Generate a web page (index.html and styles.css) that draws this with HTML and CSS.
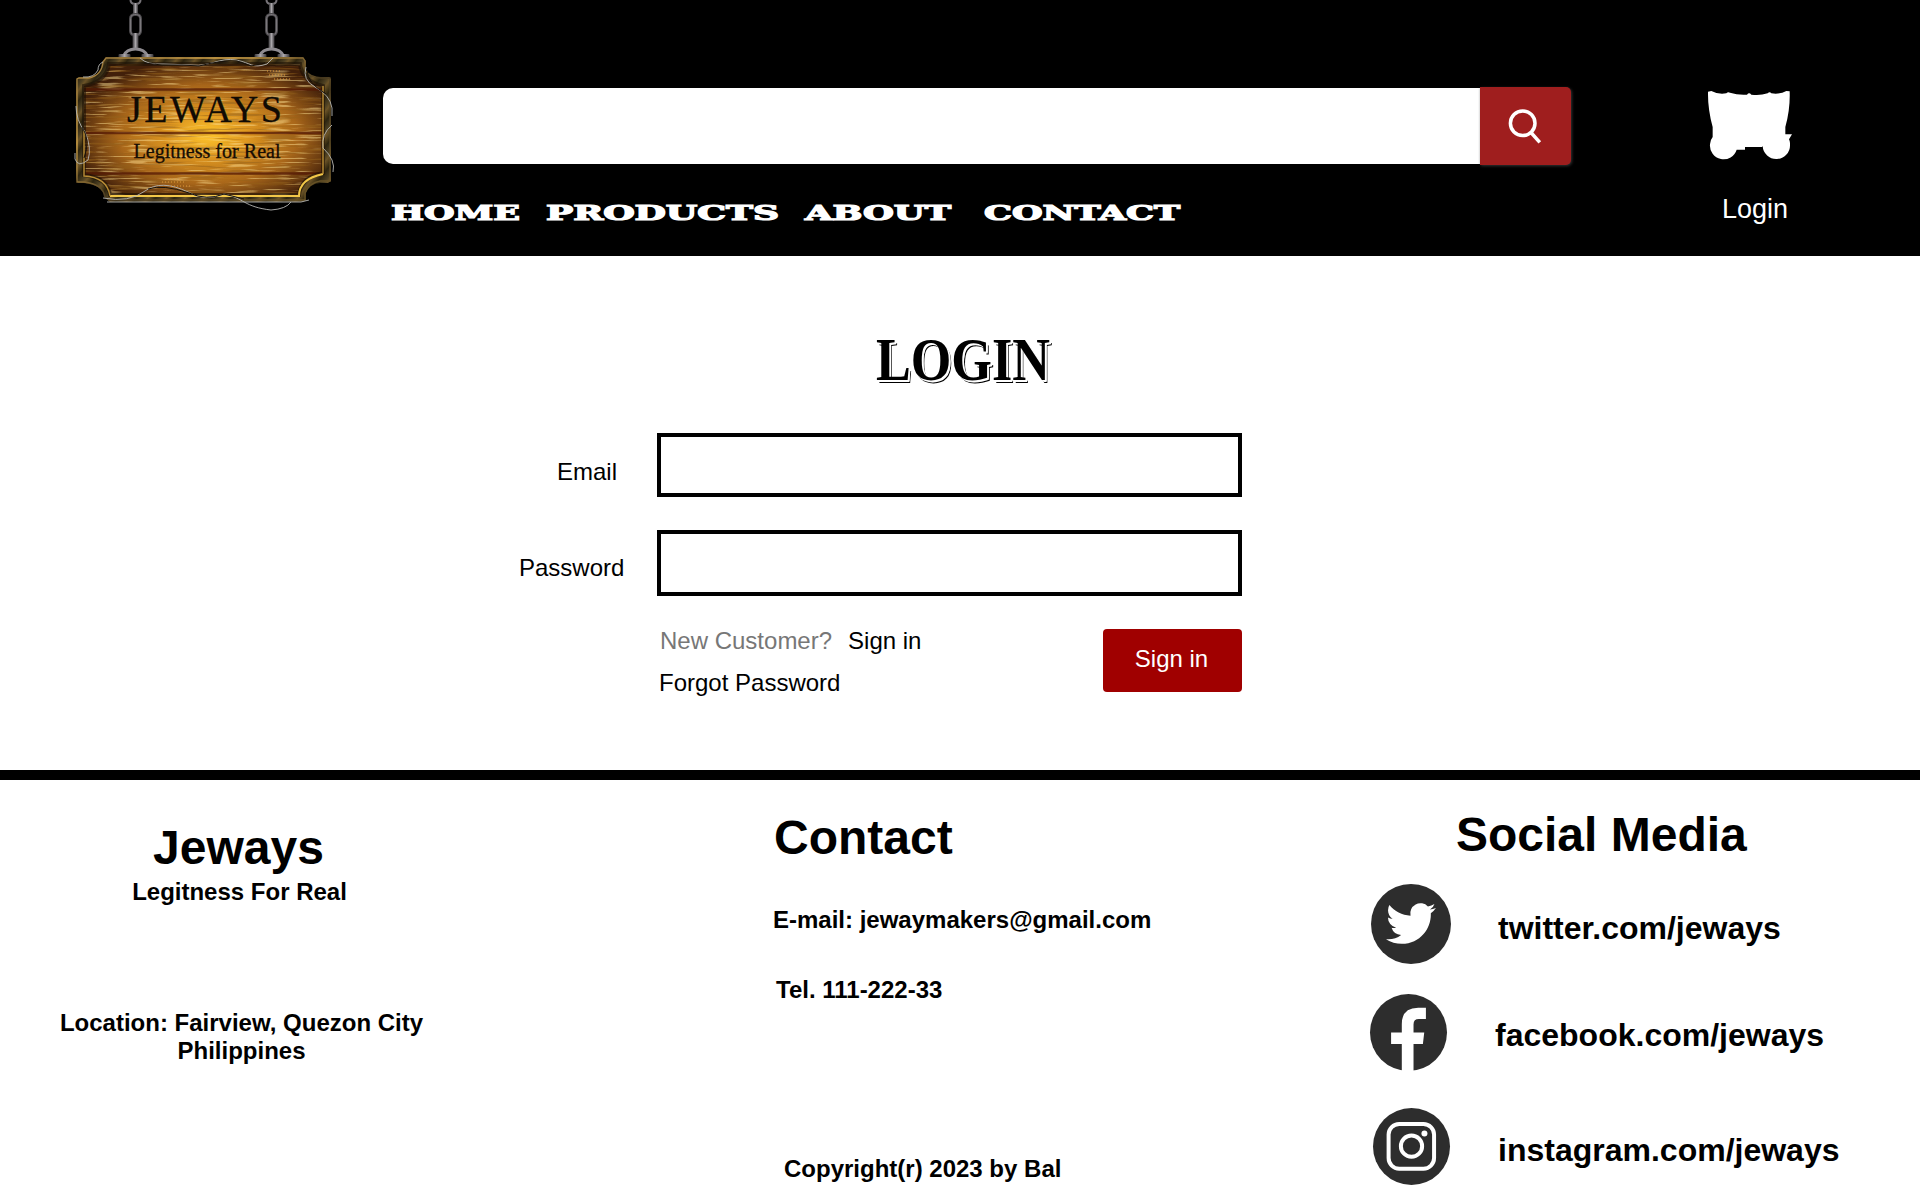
FILE: index.html
```html
<!DOCTYPE html>
<html lang="en">
<head>
<meta charset="utf-8">
<title>Jeways - Login</title>
<link rel="stylesheet" href="styles.css">
</head>
<body>
<header class="header">
  <a class="logo" href="#">
    <svg viewBox="0 0 290 220" width="290" height="220">
      <defs>
        <radialGradient id="glow" cx="52%" cy="54%" r="58%">
          <stop offset="0" stop-color="#ffc52c"/><stop offset=".3" stop-color="#dc9520"/>
          <stop offset=".65" stop-color="#a8661a"/><stop offset="1" stop-color="#42200a"/>
        </radialGradient>
        <linearGradient id="frame" x1="0" y1="0" x2="12" y2="9" gradientUnits="userSpaceOnUse" spreadMethod="repeat">
          <stop offset="0" stop-color="#2c2410"/><stop offset=".4" stop-color="#4d4022"/>
          <stop offset=".6" stop-color="#6b5327"/><stop offset="1" stop-color="#30270f"/>
        </linearGradient>
        <linearGradient id="edge" x1="0" y1="0" x2="1" y2="1">
          <stop offset="0" stop-color="#8d6f38"/><stop offset=".3" stop-color="#d9a84a"/><stop offset=".55" stop-color="#4a3b20"/>
          <stop offset="1" stop-color="#6d5626"/>
        </linearGradient>
        <linearGradient id="metal"><stop offset="0" stop-color="#39373a"/><stop offset=".5" stop-color="#a9a6aa"/><stop offset="1" stop-color="#39373a"/></linearGradient>
        <filter id="lightGrain" x="0" y="0" width="100%" height="100%">
          <feTurbulence type="fractalNoise" baseFrequency=".03 .5" numOctaves="2" seed="4"/>
          <feColorMatrix values="0 0 0 0 .96  0 0 0 0 .72  0 0 0 0 .28  6 0 0 0 -3.2"/>
          <feComposite in2="SourceGraphic" operator="in"/>
        </filter>
        <filter id="darkGrain" x="0" y="0" width="100%" height="100%">
          <feTurbulence type="fractalNoise" baseFrequency=".025 .42" numOctaves="2" seed="19"/>
          <feColorMatrix values="0 0 0 0 .3  0 0 0 0 .12  0 0 0 0 .01  6 0 0 0 -3.1"/>
          <feComposite in2="SourceGraphic" operator="in"/>
        </filter>
        <path id="board" d="M49 64H240Q242 81 263 86V173Q241 177 239 195H50Q48 178 24 175V86Q46 82 49 64Z"/>
        <g id="chain">
          <path d="M-5 0Q-5 4 0 4T5 0" fill="none" stroke="#777479" stroke-width="2"/>
          <rect x="-2.5" y="3" width="5" height="13" rx="2" fill="url(#metal)"/>
          <rect x="-5" y="14.500" width="10" height="20.500" rx="4" fill="none" stroke="#4b494c" stroke-width="3"/>
          <rect x="-5" y="14.500" width="10" height="20.500" rx="4" fill="none" stroke="#7b787c" stroke-width="1"/>
          <rect x="-3" y="33" width="6" height="17" rx="2" fill="url(#metal)"/>
          <path d="M-12 56Q-9 49 0 49T12 56" fill="none" stroke="#8e8b90" stroke-width="3"/>
          <rect x="-17" y="54" width="12" height="4" rx="1" fill="url(#metal)"/><rect x="6" y="54" width="12" height="4" rx="1" fill="url(#metal)"/>
        </g>
      </defs>
      <use href="#chain" x="75.500"/><use href="#chain" x="211.500"/>
      <path d="M46 57H243L246 61V70Q251 77 261 77H269L271 79V181L268 183H260Q249 184 246 193V200L243 202H50L44 197Q43 185 24 183H18L16 178V79L19 77H29Q41 75 42 62Z" fill="url(#frame)"/>
      <path d="M46 58H243L245 61V70Q250 78 261 78H270V181H260Q249 183 245 193V200H50L45 197Q43 184 24 182H17V79L19 78H29Q42 75 43 62Z" fill="none" stroke="url(#edge)" stroke-width="1.300"/>
      <use href="#board" fill="url(#glow)"/>
      <use href="#board" filter="url(#lightGrain)" opacity=".5"/>
      <use href="#board" filter="url(#darkGrain)" opacity=".5"/>
      <path d="M24 89.500H263M25 133H263M25 173.500H263" stroke="#541804" stroke-width="2.500" opacity=".75"/>
      <use href="#board" fill="none" stroke="#1c1005" stroke-width="4" opacity=".6"/>
      <path d="M50 196H239Q239 179 263 174" fill="none" stroke="#f2c748" stroke-width="2"/>
      <path d="M263 174V86M24 130V176Q47 177 50 196" fill="none" stroke="#b98d35" stroke-width="1.400"/>
      <g fill="none" stroke="#b6b6b2" stroke-width=".9">
        <path d="M80 58Q87 65 103 64L132 65C150 67 160 57 176 60S192 69 207 64L213 58"/>
        <path d="M43 62Q38 64 38 70Q34 78 23 77"/>
        <path d="M16 106Q16 120 25 132Q32 148 28 160Q18 168 15 159V153"/>
        <path d="M246 67Q242 80 255 87Q270 95 272 108V116M272 125Q261 134 263 148Q276 160 273 172"/>
        <path d="M47 202H241L249 200M43 198Q69 203 85 191Q101 179 128 192Q144 202 164 194C184 198 184 207 211 210Q226 209 231 202"/>
      </g>
      <g fill="none" stroke="#17110a" stroke-width="1">
        <path d="M84 63Q101 66 122 65L139 66Q162 60 177 61L191 66L205 63M247 70Q247 83 266 94M22 127Q31 140 24 158M88 189Q103 184 129 193Q147 201 164 194L184 199"/>
      </g>
      <g fill="none" stroke="#dd973b" stroke-width="1.300" stroke-dasharray="1 2" opacity=".7">
        <path d="M207 71H220M209 75H225M214 79H231M102 182H126M107 179H122M111 186H130"/>
      </g>
      <text class="logo-name" x="67" y="122" textLength="155" lengthAdjust="spacing">JEWAYS</text>
      <text class="logo-tag" x="73.500" y="158" textLength="147" lengthAdjust="spacingAndGlyphs">Legitness for Real</text>
    </svg>
  </a>
  <div class="center">
    <form class="search">
      <input class="search-input" type="text" aria-label="Search">
      <button class="search-button" type="button" aria-label="Search">
        <svg viewBox="0 0 34 36" width="34" height="36"><circle cx="14.700" cy="14.300" r="12.300"/><path d="M22.500 23 31.800 33.300"/></svg>
      </button>
    </form>
    <nav class="nav">
      <a href="#"><svg width="129" height="20"><text x="0" y="17" textLength="129" lengthAdjust="spacingAndGlyphs">HOME</text></svg></a>
      <a href="#"><svg width="233" height="20"><text x="0" y="17" textLength="233" lengthAdjust="spacingAndGlyphs">PRODUCTS</text></svg></a>
      <a href="#"><svg width="146" height="20"><text x="0" y="17" textLength="146" lengthAdjust="spacingAndGlyphs">ABOUT</text></svg></a>
      <a class="nav-last" href="#"><svg width="196" height="20"><text x="0" y="17" textLength="196" lengthAdjust="spacingAndGlyphs">CONTACT</text></svg></a>
    </nav>
  </div>
  <div class="account">
    <svg viewBox="0 0 252 204" width="84" height="68"><path fill="#fff" d="M0 2 10 0Q30 11 55 7 60 1 66 5 90 13 117 11 123 3 130 11 155 15 179 7 185 0 190 7 215 11 235 0L245 1Q247 55 232 108V130H252L243 145Q247 153 246 161A41 41 0 0 1 164 165L163 168H111V176H86A41 41 0 0 1 6 160Q6 148 14 138V108Q-1 55 0 2Z"/></svg>
    <a class="account-link" href="#">Login</a>
  </div>
</header>

<main class="main">
  <h1 class="title">LOGIN</h1>
  <form class="form">
    <label class="label label-email" for="email">Email</label>
    <input class="field field-email" id="email" type="text">
    <label class="label" for="password">Password</label>
    <input class="field field-password" id="password" type="password">
    <div class="actions">
      <div class="links">
        <p class="new">New Customer?<a class="signup" href="#">Sign in</a></p>
        <a class="forgot" href="#">Forgot Password</a>
      </div>
      <button class="submit" type="button">Sign in</button>
    </div>
  </form>
</main>

<footer class="footer">
  <section class="brand">
    <h2>Jeways</h2>
    <p class="slogan">Legitness For Real</p>
    <p class="location">Location: Fairview, Quezon City<br>Philippines</p>
  </section>
  <section class="contact">
    <h2>Contact</h2>
    <p class="email">E-mail: jewaymakers@gmail.com</p>
    <p class="tel">Tel. 111-222-33</p>
    <p class="copyright">Copyright(r) 2023 by Bal</p>
  </section>
  <section class="social">
    <h2>Social Media</h2>
    <a class="social-row twitter" href="#">
      <svg viewBox="0 0 80 80" width="80" height="80"><circle cx="40" cy="40" r="40" fill="#2d2d2d"/><path fill="#fff" transform="translate(15 14.500) scale(2.080)" d="M23.953 4.570a10 10 0 01-2.825.775 4.958 4.958 0 002.163-2.723c-.951.555-2.005.959-3.127 1.184a4.920 4.920 0 00-8.384 4.482C7.690 8.095 4.067 6.130 1.640 3.162a4.822 4.822 0 00-.666 2.475c0 1.710.870 3.213 2.188 4.096a4.904 4.904 0 01-2.228-.616v.060a4.923 4.923 0 003.946 4.827 4.996 4.996 0 01-2.212.085 4.936 4.936 0 004.604 3.417 9.867 9.867 0 01-6.102 2.105c-.390 0-.779-.023-1.170-.067a13.995 13.995 0 007.557 2.209c9.053 0 13.998-7.496 13.998-13.985 0-.210 0-.420-.015-.630A9.935 9.935 0 0024 4.590z"/></svg>
      <span>twitter.com/jeways</span>
    </a>
    <a class="social-row facebook" href="#">
      <svg viewBox="0 0 230 230" width="77" height="77"><circle cx="115" cy="115" r="115" fill="#2d2d2d"/><path fill="#fff" d="M95 230V149H63V115H95V90Q95 41 144 41H167V75H146Q130 75 130 91V115H162L158 149H130V230Z"/></svg>
      <span>facebook.com/jeways</span>
    </a>
    <a class="social-row instagram" href="#">
      <svg viewBox="0 0 232 232" width="77" height="77"><circle cx="116" cy="116" r="116" fill="#2d2d2d"/><g fill="none" stroke="#fff" stroke-width="12"><rect x="47" y="48" width="137" height="135" rx="32"/><circle cx="116" cy="115" r="32"/></g><circle cx="155" cy="77" r="9" fill="#fff"/></svg>
      <span>instagram.com/jeways</span>
    </a>
  </section>
</footer>
</body>
</html>
```
FILE: styles.css
```css
* { box-sizing: border-box; }
body {
  margin: 0;
  width: 1920px;
  height: 1200px;
  overflow: hidden;
  background: #fff;
  color: #000;
  font: 24px/28px "Liberation Sans", Arial, sans-serif;
}
h1, h2, p { margin: 0; }
a { color: inherit; text-decoration: none; }
svg { display: block; flex: none; overflow: visible; }

.header {
  height: 256px;
  background: #000;
  color: #fff;
  display: flex;
  align-items: flex-start;
  padding-left: 60px;
}
.logo { margin-right: 33px; }
.logo-name { font: 38px "Liberation Serif", serif; fill: #100b04; stroke: #100b04; stroke-width: .3px; }
.logo-tag { font: 20px "Liberation Serif", serif; fill: #160d04; stroke: #160d04; stroke-width: .3px; }

.center { width: 1188px; padding-top: 87px; }
.search { display: flex; align-items: center; height: 78px; }
.search-input {
  flex: 1;
  height: 76px;
  border: 0;
  border-radius: 10px 0 0 10px;
  background: #fff;
}
.search-button {
  display: flex;
  align-items: flex-start;
  width: 91px;
  height: 78px;
  padding: 22px 0 0 28px;
  border: 0;
  border-radius: 0 5px 5px 0;
  background: #9f1e1e;
  box-shadow: 1px 1px 3px #333;
}
.search-button svg { fill: none; stroke: #fff; stroke-width: 3.5px; }

.nav { display: flex; gap: 26px; padding: 38px 0 0 8px; }
.nav text {
  font: bold 20.5px "DejaVu Serif", serif;
  fill: #fff;
  stroke: #fff;
  stroke-width: 1.2px;
}
.nav-last { margin-left: 7px; }

.account { margin-left: 137px; padding-top: 91px; }
.account-link { display: block; margin: 34px 0 0 14px; font-size: 27px; line-height: 32px; }

.main { height: 514px; padding-top: 65px; }
.title {
  width: 220px;
  margin-left: 876px;
  font: bold 61px/78px "Liberation Serif", serif;
  transform: scaleX(.855);
  transform-origin: left;
  text-shadow: 1px 1px #fff, 2px 1px #fff, 2px 2px #fff, 3px 3px #000;
}
.form {
  display: grid;
  grid-template-columns: 138px 585px;
  margin: 34px 0 0 519px;
}
.label { padding-top: 24px; }
.label-email { padding: 25px 0 0 38px; }
.field { width: 585px; border: 4px solid #000; border-radius: 0; background: #fff; }
.field-email { height: 64px; margin-bottom: 33px; }
.field-password { height: 66px; }
.actions {
  grid-column: 2;
  display: flex;
  justify-content: space-between;
  margin-top: 33px;
}
.links { padding: 0 0 0 2px; margin-top: -2px; }
.new { color: #777; padding-left: 1px; }
.signup { color: #000; margin-left: 16px; }
.forgot { display: block; margin-top: 14px; }
.submit {
  width: 139px;
  height: 63px;
  padding: 0 2px 3px 0;
  border: 0;
  border-radius: 4px;
  background: #a00000;
  color: #fff;
  font: inherit;
}

.footer {
  height: 430px;
  border-top: 10px solid #000;
  display: grid;
  grid-template-columns: 483px 887px 550px;
  font-weight: bold;
}
h2 { font-size: 48px; line-height: 56px; }
.brand { padding-top: 40px; text-align: center; }
.brand h2 { margin-right: 6px; }
.slogan { margin: 2px 4px 0 0; }
.location { margin-top: 103px; }
.contact { padding: 30px 0 0 290px; }
.contact h2 { margin-left: 1px; }
.email { margin-top: 40px; }
.tel { margin: 42px 0 0 3px; }
.copyright { margin: 151px 0 0 11px; }
.social { padding-top: 27px; }
.social h2 { margin-left: 86px; }
.social-row { display: flex; align-items: flex-start; font-size: 32px; line-height: 36px; }
.twitter { margin: 21px 0 0 1px; }
.twitter span { margin: 26px 0 0 47px; }
.facebook { margin-top: 30px; }
.facebook span { margin: 23px 0 0 48px; }
.instagram { margin: 37px 0 0 3px; }
.instagram span { margin: 24px 0 0 48px; }
```
